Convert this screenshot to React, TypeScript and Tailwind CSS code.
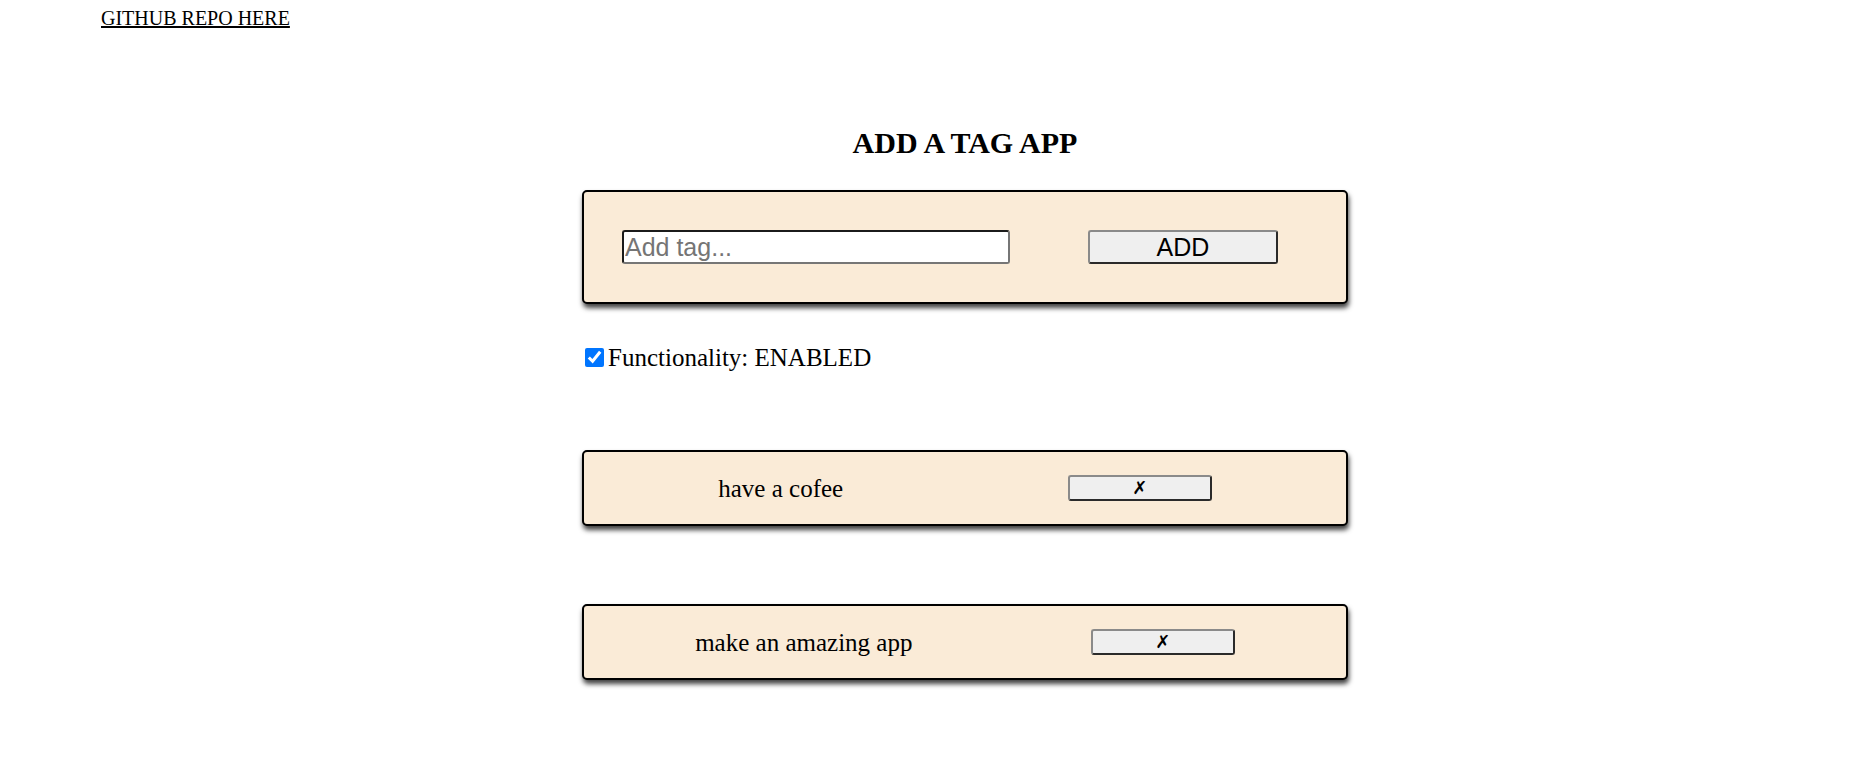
import { useState } from 'react';

interface Tag {
  id: number;
  text: string;
}

const serif = "font-['Liberation_Serif','Times_New_Roman',serif]";
const sans = "font-['Liberation_Sans',Arial,sans-serif]";

function TagRow({ tag, onRemove }: { tag: Tag; onRemove: (id: number) => void }) {
  return (
    <div className="flex items-center justify-around h-[76px] px-[22px] bg-[#faebd7] border-2 border-black rounded-[5px] shadow-[1px_4px_5px_rgba(0,0,0,0.75)]">
      <span className={`${serif} text-[25px] leading-[29px] text-black`}>{tag.text}</span>
      <button
        onClick={() => onRemove(tag.id)}
        className="w-[144px] h-[26px] flex items-center justify-center bg-[#efefef] border-2 border-t-[#8a8a8a] border-l-[#8a8a8a] border-r-[#2a2a2a] border-b-[#2a2a2a] rounded-[3px] font-['DejaVu_Sans',sans-serif] text-[18px] leading-[20px] text-black"
      >
        ✗
      </button>
    </div>
  );
}

export default function App() {
  const [enabled, setEnabled] = useState(true);
  const [value, setValue] = useState('');
  const [tags, setTags] = useState<Tag[]>([
    { id: 1, text: 'have a cofee' },
    { id: 2, text: 'make an amazing app' },
  ]);

  const addTag = () => {
    if (!enabled || !value.trim()) return;
    setTags([...tags, { id: Date.now(), text: value.trim() }]);
    setValue('');
  };

  const removeTag = (id: number) => {
    if (!enabled) return;
    setTags(tags.filter((t) => t.id !== id));
  };

  return (
    <div className={`min-h-[762px] bg-white text-black ${serif}`}>
      <div className="pt-[7px] pl-[101px] text-[20px] leading-[23px]">
        <a href="#" className="underline text-black">
          GITHUB REPO HERE
        </a>
      </div>

      <div className="flex flex-col items-center pl-[60px]">
        <div className="w-[766px] flex flex-col">
          <h2 className="mt-[96px] text-center text-[30px] leading-[34px] font-bold">ADD A TAG APP</h2>

          {/* input card */}
          <div className="mt-[30px] flex items-center py-[38px] pl-[38px] bg-[#faebd7] border-2 border-black rounded-[5px] shadow-[1px_4px_5px_rgba(0,0,0,0.75)]">
            <input
              value={value}
              onChange={(e) => setValue(e.target.value)}
              placeholder="Add tag..."
              className={`${sans} w-[388px] h-[34px] px-[1px] bg-white text-[25px] leading-[30px] text-black placeholder:text-[#757575] border-2 border-t-[#1b1b1b] border-l-[#1b1b1b] border-r-[#767676] border-b-[#767676] rounded-[3px] outline-none`}
            />
            <button
              onClick={addTag}
              className={`${sans} ml-[78px] w-[190px] h-[34px] bg-[#efefef] text-[25px] leading-[30px] text-black border-2 border-t-[#8a8a8a] border-l-[#8a8a8a] border-r-[#2a2a2a] border-b-[#2a2a2a] rounded-[3px]`}
            >
              ADD
            </button>
          </div>

          <label className="mt-[39px] flex items-center h-[29px] text-[25px] leading-[29px]">
            <input
              type="checkbox"
              checked={enabled}
              onChange={(e) => setEnabled(e.target.checked)}
              className="ml-[3px] w-[19px] h-[19px] m-0 accent-[#0075ff]"
            />
            <span className="ml-[4px]">Functionality: {enabled ? 'ENABLED' : 'DISABLED'}</span>
          </label>

          <div className="mt-[78px] flex flex-col gap-[78px]">
            {tags.map((tag) => (
              <TagRow key={tag.id} tag={tag} onRemove={removeTag} />
            ))}
          </div>
        </div>
      </div>
    </div>
  );
}
